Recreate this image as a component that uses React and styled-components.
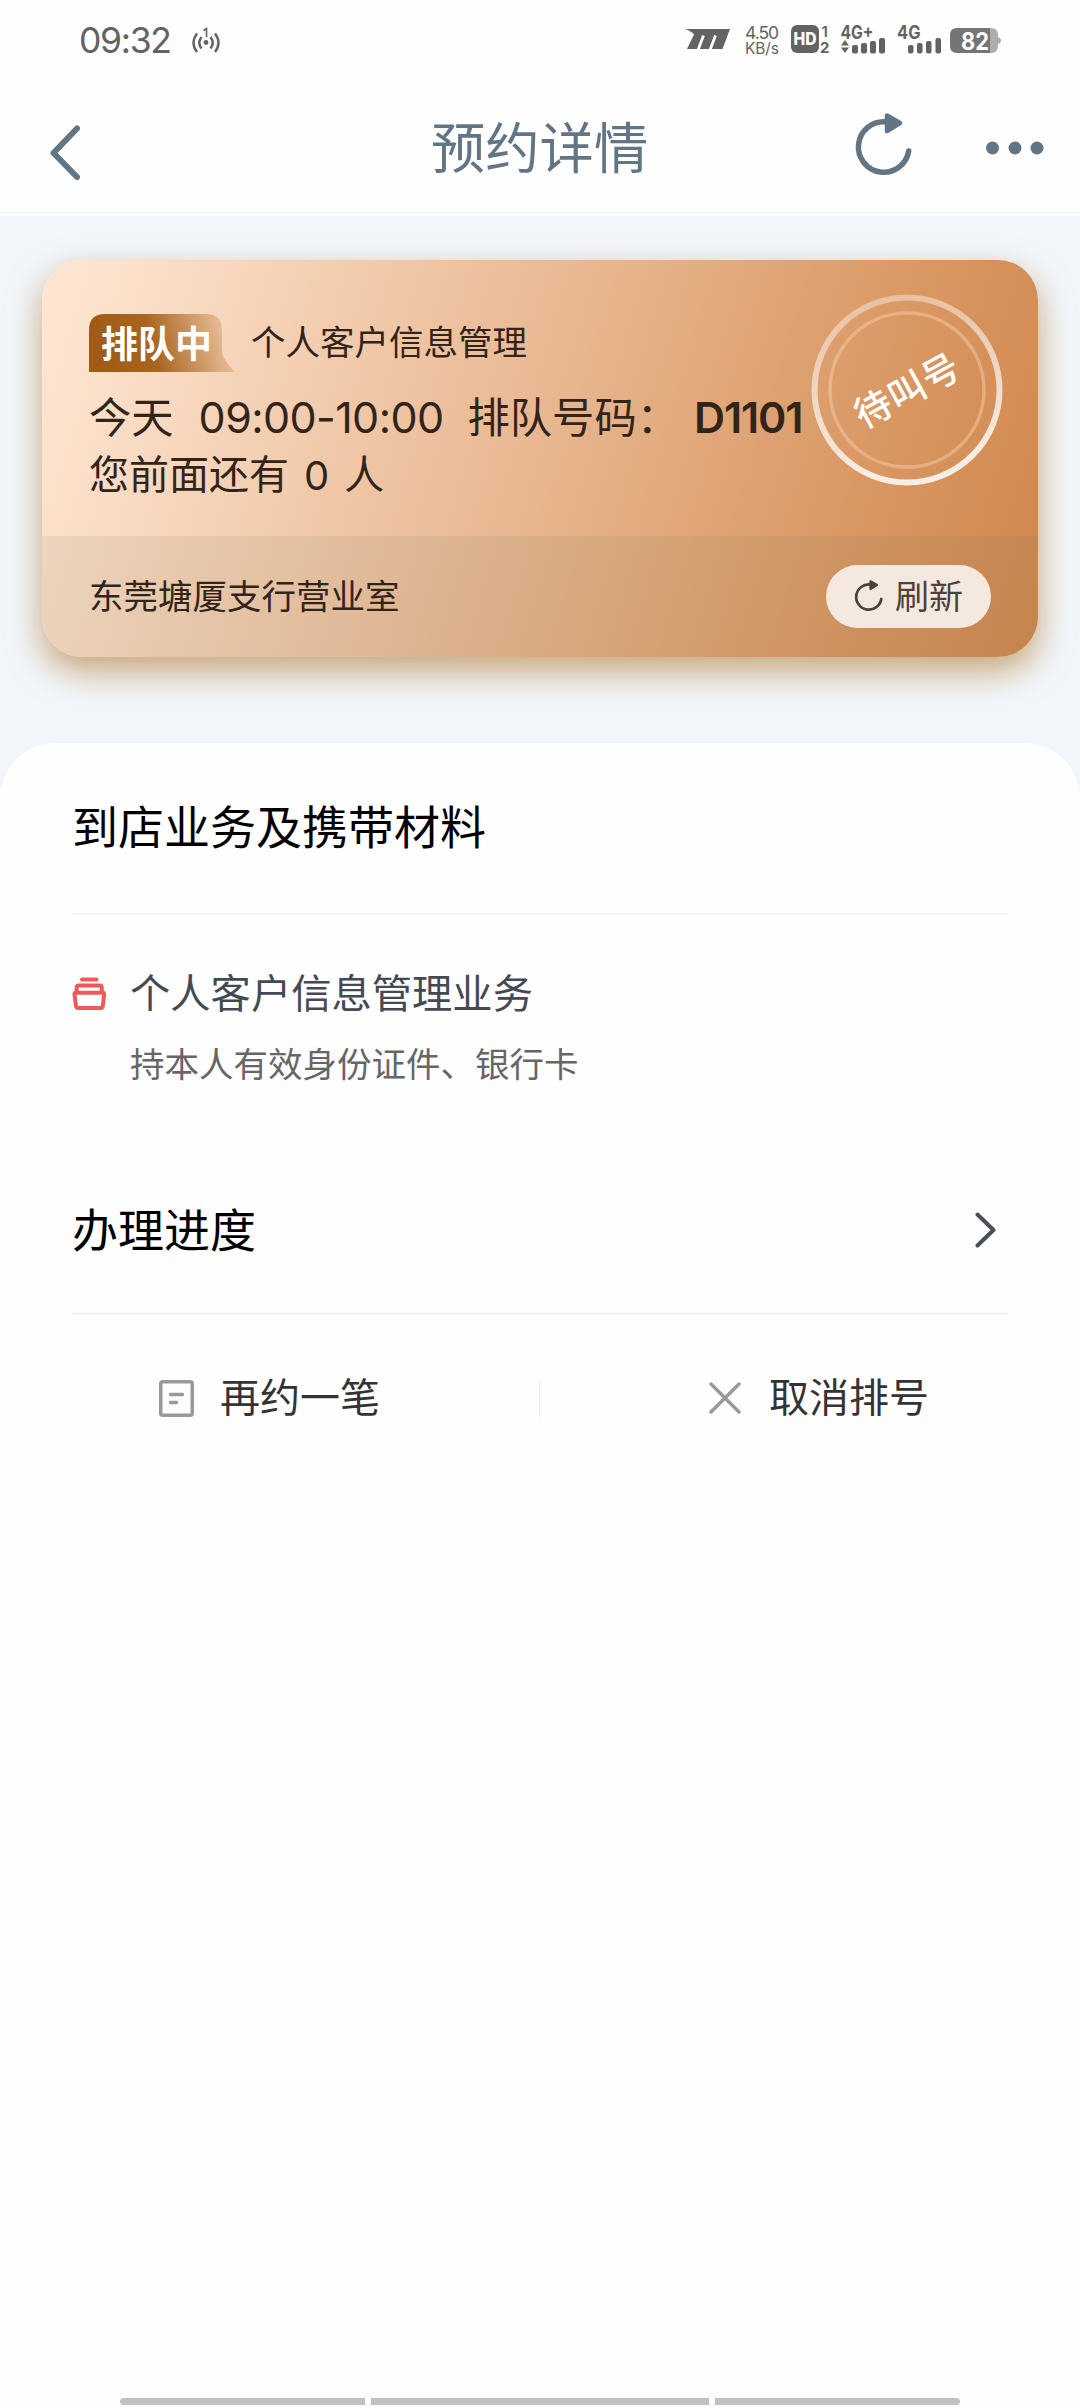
import React from 'react'
import styled, { createGlobalStyle } from 'styled-components'

const GlobalStyle = createGlobalStyle`
  * {
    box-sizing: border-box;
  }

  body {
    margin: 0;
    background: #fefefe;
    font-family: 'Noto Sans CJK SC', sans-serif;
  }

  svg {
    display: block;
    flex: none;
  }
`

const Page = styled.div`
  display: flex;
  flex-direction: column;
  width: 1080px;
  height: 2408px;
  overflow: hidden;
`

const StatusBar = styled.div`
  display: flex;
  align-items: center;
  justify-content: space-between;
  height: 80px;
  padding: 0 78px 0 79px;
`

const StatusGroup = styled.div`
  display: flex;
  align-items: center;
  height: 80px;
`

const Clock = styled.span`
  width: 113px;
  padding-top: 2px;
  font-family: Inter, sans-serif;
  font-size: 35.5px;
  line-height: 80px;
  letter-spacing: -1.3px;
  color: #636363;
`

const NavBar = styled.header`
  display: grid;
  grid-template-columns: 389px 218px 1fr;
  height: 133px;
  padding: 0 36px 0 42px;
  border-bottom: 1px solid #f0f0f0;
  color: #627585;
`

const Title = styled.h1`
  margin: 0;
  padding-top: 25px;
  font-size: 54.3px;
  font-weight: 400;
  line-height: 80px;
  white-space: nowrap;
`

const BackButton = styled.div`
  padding-top: 40px;
`

const NavActions = styled.div`
  display: flex;
  align-items: center;
  justify-content: flex-end;
  gap: 68px;
  height: 64px;
  margin-top: 33px;

  svg + svg {
    margin-top: 6px;
  }
`

const Hero = styled.section`
  margin-top: 3px;
  height: 600px;
  padding: 44px 42px 0;
  background: #f2f6fb;
`

const Card = styled.div`
  position: relative;
  height: 397px;
  border-radius: 40px;
  overflow: hidden;
  color: #33241a;
  background: linear-gradient(107deg, #fee5d1 3%, #e7b58e 51%, #d99762 80%, #d0864c 100%);
`

const CardShadow = styled.div`
  border-radius: 40px;
  box-shadow: 0 14px 34px rgba(170, 112, 34, 0.6);
`

const CardBody = styled.div`
  height: 276px;
  padding: 54px 47px 0;
`

const CardFooter = styled.div`
  display: flex;
  align-items: center;
  justify-content: space-between;
  height: 121px;
  padding: 0 47px;
  font-size: 34.5px;
  background: rgba(115, 115, 90, 0.11);
`

/* the CJK face sits low in its line box, the padding lifts it back */
const Label = styled.span`
  padding-bottom: ${p => p.$lift || 6}px;
  white-space: pre;
`

const TopRow = styled.div`
  display: flex;
  align-items: center;
  gap: 16px;
  height: 58px;
  font-size: 34.5px;
`

const Badge = styled.div`
  display: grid;
  width: 146px;
  height: 58px;

  > * {
    grid-area: 1 / 1;
  }
`

const BadgeText = styled.span`
  padding-left: 12px;
  color: #fff;
  font-size: 37px;
  font-weight: 700;
  line-height: 56px;
  z-index: 1;
`

const TimeRow = styled.div`
  display: flex;
  align-items: center;
  height: 62px;
  margin-top: 14px;
  font-size: 42.3px;
  white-space: nowrap;
`

const Digits = styled.span`
  margin: ${p => p.$margin || '0'};
  font-family: Inter, sans-serif;
  font-size: ${p => p.$size || 43}px;
  font-weight: ${p => p.$weight || 400};
  letter-spacing: ${p => p.$spacing || 0}px;
`

const AheadRow = styled.div`
  display: flex;
  align-items: center;
  height: 54px;
  font-size: 40px;
`

const Stamp = styled.div`
  position: absolute;
  top: 34px;
  right: 35px;
  display: grid;
  place-items: center;
  width: 192px;
  height: 192px;

  > * {
    grid-area: 1 / 1;
  }
`

const StampText = styled.span`
  padding-bottom: 4px;
  color: #fff;
  font-size: 37px;
  font-weight: 500;
  line-height: 40px;
  letter-spacing: 1px;
  transform: rotate(-28.5deg);
`

const RefreshButton = styled.button`
  display: flex;
  align-items: center;
  gap: 10px;
  width: 165px;
  height: 63px;
  padding: 0 0 0 27px;
  border: none;
  border-radius: 32px;
  background: #f5e9df;
  color: #4f4038;
  font-family: inherit;
  font-size: 34px;

  svg {
    margin-bottom: 2px;
  }
`

const Sheet = styled.main`
  position: relative;
  flex: 1;
  margin-top: -73px;
  padding: 0 72px;
  border-radius: 56px 56px 0 0;
  background: #fefefe;
`

const SectionHead = styled.div`
  display: flex;
  align-items: center;
  justify-content: space-between;
  height: ${p => p.$height}px;
  padding-right: 12px;
  border-bottom: ${p => p.$line}px solid ${p => (p.$line > 1 ? '#f3f4f6' : '#e9e9e9')};

  svg {
    margin-bottom: 3px;
  }
`

const SectionTitle = styled.h2`
  margin: 0;
  padding-bottom: 8px;
  color: #000;
  font-size: 46px;
  font-weight: 400;
  line-height: 60px;
`

const Item = styled.div`
  display: grid;
  grid-template-columns: 58px 1fr;
  grid-template-rows: 56px 56px;
  row-gap: 15px;
  align-items: center;
  height: 234px;
  padding-top: 48px;

  svg {
    margin-top: 6px;
  }
`

const ItemName = styled.div`
  color: #444a53;
  font-size: 40.3px;
  line-height: 56px;
`

const ItemDesc = styled.div`
  grid-column: 2;
  color: #666;
  font-size: 34.5px;
  line-height: 56px;
`

const Actions = styled.div`
  display: grid;
  grid-template-columns: 467px 1px 1fr;
  align-items: center;
  height: 168px;
`

const Separator = styled.div`
  height: 37px;
  background: #efefef;
`

const Action = styled.div`
  display: flex;
  align-items: center;
  gap: ${p => p.$gap}px;
  padding-left: ${p => p.$left}px;
  color: #333;
  font-size: 40px;
  line-height: 56px;
`

const HomeBar = styled.div`
  display: grid;
  grid-template-columns: 245px 338px 245px;
  gap: 6px;
  justify-content: center;
  height: 10px;
  background: #fefefe;

  span {
    height: 7px;
    background: #c1c1c1;
  }

  span:first-child {
    border-radius: 4px 0 0 4px;
  }

  span:last-child {
    border-radius: 0 4px 4px 0;
  }
`

const Hotspot = () => (
  <svg width="28" height="28" viewBox="192 26 28 28" fill="none" stroke="#636363" strokeWidth="2.4">
    <path d="M197 33.500Q190 43 197 52M201.500 37Q197 43 201.500 48.500M215 33.500Q222 43 215 52M210.500 37Q215 43 210.500 48.500" />
    <circle cx="206" cy="42.500" r="2.4" fill="#636363" stroke="none" />
    <path d="M203.500 30.500L206.500 28.500V37" strokeWidth="1.600" />
  </svg>
)

const StatusIcons = () => (
  <svg width="318" height="40" viewBox="684 20 318 40" fill="#636363" fontFamily="Inter, sans-serif">
    <path d="M685 29H730L722.500 49H687L694 34.500Q691 31 685 29Z" />
    <path d="M703.500 35.500L698 50M715.500 35.500L710 50" stroke="#fefefe" strokeWidth="2.800" />
    <text x="745" y="39" fontSize="17.500" textLength="34">4.50</text>
    <text x="745" y="54" fontSize="15.500" textLength="34">KB/s</text>
    <rect x="791" y="25" width="28" height="28" rx="6" />
    <text x="793.500" y="45" fontSize="17" fontWeight="800" fill="#fff" textLength="23" lengthAdjust="spacingAndGlyphs">HD</text>
    <text x="821.500" y="36.500" fontSize="15" fontWeight="600">1</text>
    <text x="820" y="53" fontSize="15" fontWeight="700">2</text>
    <text x="840.500" y="38.500" fontSize="18.500" fontWeight="700" textLength="33" lengthAdjust="spacingAndGlyphs">4G+</text>
    <path d="M841 45.500L845 40L849 45.500ZM841 47.500L845 53L849 47.500Z" />
    <rect x="852" y="45" width="6" height="8.500" rx="2" />
    <rect x="861" y="43" width="6" height="10.500" rx="2" />
    <rect x="870" y="41" width="6" height="12.500" rx="2" />
    <rect x="879" y="38" width="6" height="15.500" rx="2" />
    <text x="897" y="38.500" fontSize="18.500" fontWeight="700" textLength="23.500" lengthAdjust="spacingAndGlyphs">4G</text>
    <rect x="908" y="45" width="5.500" height="8.500" rx="2" />
    <rect x="917" y="43" width="5.500" height="10.500" rx="2" />
    <rect x="926" y="41" width="5.500" height="12.500" rx="2" />
    <rect x="935.500" y="38" width="5.500" height="15.500" rx="2" />
    <path d="M988 28H991Q998 28 998 35V37Q1001 38 1001 40.500T998 44V46Q998 53 991 53H988Z" fill="#adadad" />
    <path d="M957 28H990V53H957Q950 53 950 46V35Q950 28 957 28Z" fill="#757575" />
    <text x="961" y="49.500" fontSize="24" fontWeight="700" fill="#fff" textLength="28" lengthAdjust="spacingAndGlyphs">82</text>
  </svg>
)

const BackIcon = () => (
  <svg width="46" height="66" viewBox="42 120 46 66" fill="none" stroke="currentColor" strokeWidth="6" strokeLinecap="round" strokeLinejoin="round">
    <path d="M77 128.500L53.500 153L77 177" />
  </svg>
)

const ReloadIcon = ({ size, weight = 5.500 }) => (
  <svg width={size} height={size} viewBox="854 113 64 64" fill="none" stroke="currentColor" strokeWidth={weight} strokeLinecap="round">
    <path d="M888 121.800A25.300 25.300 0 1 0 910.700 151" />
    <path d="M889 115.500L902 123L889 131Z" fill="currentColor" strokeWidth="4.500" strokeLinejoin="round" />
  </svg>
)

const MoreIcon = () => (
  <svg width="60" height="20" viewBox="0 0 60 20" fill="currentColor">
    <circle cx="8.500" cy="10" r="6.500" />
    <circle cx="31" cy="10" r="6.500" />
    <circle cx="53" cy="10" r="6.500" />
  </svg>
)

const BadgeShape = () => (
  <svg width="146" height="58" viewBox="0 0 146 58">
    <defs>
      <linearGradient id="badge" x1="0" y1="58" x2="146" y2="20" gradientUnits="userSpaceOnUse">
        <stop offset="0.1" stopColor="#a05b15" />
        <stop offset="0.45" stopColor="#a9641f" />
        <stop offset="1" stopColor="#f0c9a8" />
      </linearGradient>
    </defs>
    <path d="M0 58V16Q0 0 16 0H117Q133 0 133 16V40Q138 50 146 58Z" fill="url(#badge)" />
  </svg>
)

const StampRings = () => (
  <svg width="192" height="192" viewBox="0 0 192 192" fill="none">
    <defs>
      <linearGradient id="ring" x1="0" y1="0" x2="0.25" y2="1">
        <stop offset="0" stopColor="#fff" stopOpacity="0.34" />
        <stop offset="1" stopColor="#fff" stopOpacity="0.84" />
      </linearGradient>
    </defs>
    <circle cx="96" cy="96" r="92.500" stroke="url(#ring)" strokeWidth="6" />
    <circle cx="96" cy="96" r="77" stroke="#fbd0ae" strokeOpacity="0.45" strokeWidth="3.500" />
  </svg>
)

const StackIcon = () => (
  <svg width="34" height="34" viewBox="72 977 34 34" fill="none" stroke="#ee5a5a" strokeWidth="4" strokeLinecap="round" strokeLinejoin="round">
    <path d="M82 979.500H96.500" />
    <path d="M76.700 991V987.500Q76.700 985.500 78.700 985.500H99.800Q101.800 985.500 101.800 987.500V991" />
    <path d="M75.500 992.800H103Q104.300 992.800 104.100 994.500L102.800 1006Q102.600 1008 100.600 1008H78.300Q76.300 1008 76 1006L74.500 994.500Q74.300 992.800 75.500 992.800Z" />
  </svg>
)

const ArrowIcon = () => (
  <svg width="21" height="38" viewBox="0 0 21 38" fill="none" stroke="#4b4f58" strokeWidth="4" strokeLinecap="round" strokeLinejoin="round">
    <path d="M2.500 3.500L18.500 19L2.500 34.500" />
  </svg>
)

const NoteIcon = () => (
  <svg width="35" height="37" viewBox="0 0 35 37" fill="none" stroke="#999" strokeWidth="3.500" strokeLinecap="round">
    <rect x="1.750" y="1.750" width="31.500" height="33.500" rx="2" />
    <path d="M11.500 14.500H23.500M11.500 22.500H17.500" />
  </svg>
)

const CrossIcon = () => (
  <svg width="32" height="32" viewBox="0 0 32 32" fill="none" stroke="#999" strokeWidth="3.400" strokeLinecap="round">
    <path d="M2 2L30 30M30 2L2 30" />
  </svg>
)

export default () => (
  <Page>
    <GlobalStyle />
    <StatusBar>
      <StatusGroup>
        <Clock>09:32</Clock>
        <Hotspot />
      </StatusGroup>
      <StatusIcons />
    </StatusBar>
    <NavBar>
      <BackButton>
        <BackIcon />
      </BackButton>
      <Title>预约详情</Title>
      <NavActions>
        <ReloadIcon size={64} />
        <MoreIcon />
      </NavActions>
    </NavBar>
    <Hero>
      <CardShadow>
        <Card>
          <CardBody>
            <TopRow>
              <Badge>
                <BadgeShape />
                <BadgeText>排队中</BadgeText>
              </Badge>
              <Label>个人客户信息管理</Label>
            </TopRow>
            <TimeRow>
              <Label>今天</Label>
              <Digits $margin="0 24px 0 25px" $spacing={-0.6}>09:00-10:00</Digits>
              <Label>排队号码：</Label>
              <Digits $margin="0 0 0 15px" $weight={600} $spacing={-1.1}>D1101</Digits>
            </TimeRow>
            <AheadRow>
              <Label>您前面还有</Label>
              <Digits $size={40} $margin="0 15px">0</Digits>
              <Label>人</Label>
            </AheadRow>
          </CardBody>
          <CardFooter>
            <Label>东莞塘厦支行营业室</Label>
            <RefreshButton>
              <ReloadIcon size={32} weight={5.500} />
              <Label $lift={5}>刷新</Label>
            </RefreshButton>
          </CardFooter>
          <Stamp>
            <StampRings />
            <StampText>待叫号</StampText>
          </Stamp>
        </Card>
      </CardShadow>
    </Hero>
    <Sheet>
      <SectionHead $height={172} $line={2}>
        <SectionTitle>到店业务及携带材料</SectionTitle>
      </SectionHead>
      <Item>
        <StackIcon />
        <ItemName>个人客户信息管理业务</ItemName>
        <ItemDesc>持本人有效身份证件、银行卡</ItemDesc>
      </Item>
      <SectionHead $height={165} $line={1}>
        <SectionTitle>办理进度</SectionTitle>
        <ArrowIcon />
      </SectionHead>
      <Actions>
        <Action $left={87} $gap={26}>
          <NoteIcon />
          <Label>再约一笔</Label>
        </Action>
        <Separator />
        <Action $left={169} $gap={28}>
          <CrossIcon />
          <Label>取消排号</Label>
        </Action>
      </Actions>
    </Sheet>
    <HomeBar>
      <span />
      <span />
      <span />
    </HomeBar>
  </Page>
)
